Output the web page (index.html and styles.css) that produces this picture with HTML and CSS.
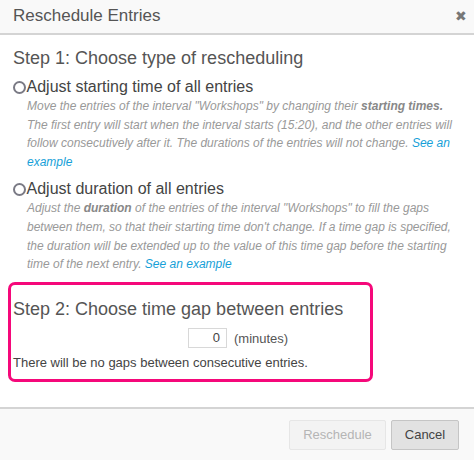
FILE: index.html
```html
<!DOCTYPE html>
<html>
<head>
<meta charset="utf-8">
<link rel="stylesheet" href="styles.css">
</head>
<body>
<div class="dialog">
  <div class="header">
    <span class="title">Reschedule Entries</span>
    <span class="close">✖</span>
  </div>
  <div class="body">
    <h2 class="step">Step 1: Choose type of rescheduling</h2>
    <div class="option">
      <span class="radio"></span><span class="label">Adjust starting time of all entries</span>
    </div>
    <p class="desc">Move the entries of the interval "Workshops" by changing their <b>starting times.</b> The first entry will start when the interval starts (15:20), and the other entries will follow consecutively after it. The durations of the entries will not change. <a href="#">See an example</a></p>
    <div class="option second">
      <span class="radio"></span><span class="label">Adjust duration of all entries</span>
    </div>
    <p class="desc">Adjust the <b>duration</b> of the entries of the interval "Workshops" to fill the gaps between them, so that their starting time don't change. If a time gap is specified, the duration will be extended up to the value of this time gap before the starting time of the next entry. <a href="#">See an example</a></p>
    <div class="step2">
      <h2 class="step">Step 2: Choose time gap between entries</h2>
      <div class="gaprow">
        <span class="input">0</span><span class="unit">(minutes)</span>
      </div>
      <p class="note">There will be no gaps between consecutive entries.</p>
    </div>
  </div>
  <div class="footer">
    <button class="btn disabled">Reschedule</button>
    <button class="btn cancel">Cancel</button>
  </div>
</div>
</body>
</html>
```
FILE: styles.css
```css
* { box-sizing: border-box; }
html, body { margin: 0; padding: 0; background: #fff; }
body { font-family: "Liberation Sans", Arial, sans-serif; color: #444; }
.dialog { width: 474px; height: 460px; display: flex; flex-direction: column; }
.header {
  height: 35px; background: #f9f9f9; border-bottom: 2px solid #d4d4d4;
  display: flex; align-items: center; justify-content: space-between;
  padding: 0 7px 1px 13px;
}
.title { font-size: 17px; color: #555; }
.close { font-size: 14px; color: #777; }
.body { flex: 1; padding: 12px 13px 0 13px; }
.step { font-size: 18px; line-height: 22px; font-weight: normal; color: #555; margin: 0; }
.option { display: flex; align-items: center; margin-top: 8px; height: 20px; }
.option.second { margin-top: 8px; }
.radio {
  width: 13px; height: 13px; border: 2px solid #7a7a85; border-radius: 50%;
  margin-left: -0.5px; margin-right: 1px; margin-top: 1px; flex: none;
}
.label { font-size: 16px; line-height: 20px; color: #444; }
.desc {
  margin: 0 0 0 14px; font-size: 12px; line-height: 18.6px; font-style: italic; color: #999;
}
.desc b { color: #888; }
.desc a, .desc a:visited { color: #169fd8; text-decoration: none; }
.step2 {
  margin: 8px 0 0 -5px; width: 365px; border: 3px solid #f5087a; border-radius: 7px;
  padding: 13px 2px 7px 2px;
}
.gaprow { display: flex; align-items: center; margin-top: 8px; padding-left: 175px; height: 21px; }
.input {
  width: 39px; height: 20px; border: 1px solid #d8d8d8; text-align: right;
  font-size: 13px; line-height: 18px; padding-right: 6px; color: #444;
}
.unit { font-size: 13px; margin-left: 7px; color: #555; }
.note { margin: 5px 0 0 0; font-size: 13px; line-height: 18px; color: #444; }
.footer {
  height: 53px; border-top: 2px solid #d4d4d4; background: #f9f9f9;
  display: flex; justify-content: flex-end; align-items: center; gap: 5px; padding: 0 15px 0 0;
}
.btn { font-family: "Liberation Sans", Arial, sans-serif; font-size: 13px; height: 30px; border-radius: 2px; }
.disabled { width: 97px; background: #f3f3f3; border: 1px solid #e6e6e6; color: #b5b5b5; }
.cancel { width: 68px; background: #e2e2e2; border: 1px solid #c5c5c5; color: #444; }
```
